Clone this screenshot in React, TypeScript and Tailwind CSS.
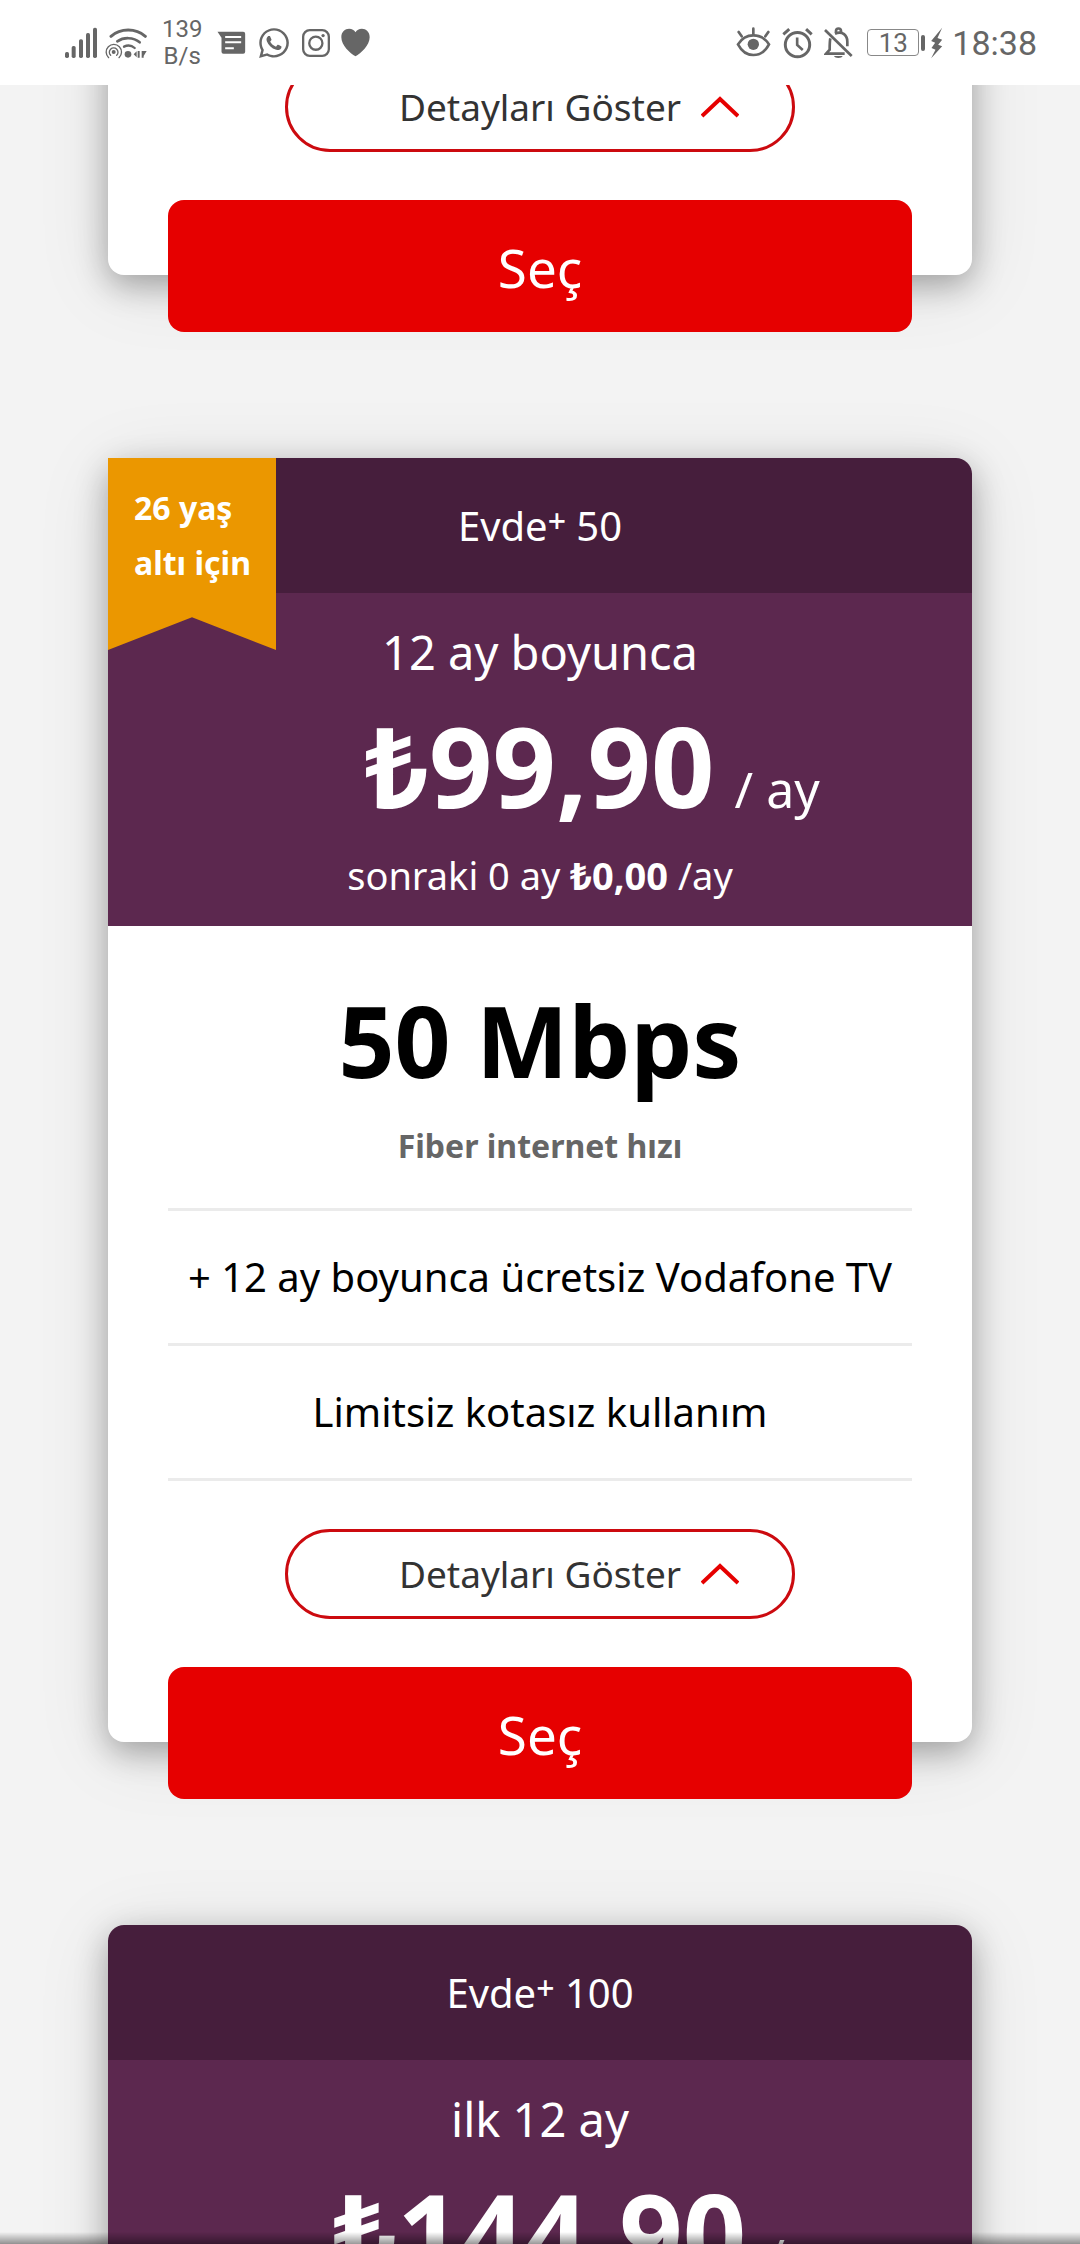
import React from "react";
import { FaWhatsapp } from "react-icons/fa";

interface Plan {
  id: number;
  name: string;
  speed: string;
  badge?: string[];
  period: string;
  price: string;
  nextMonths?: string;
  nextPrice?: string;
  mbps?: string;
  features?: string[];
}

const plans: Plan[] = [
  {
    id: 2,
    name: "Evde",
    speed: "50",
    badge: ["26 yaş", "altı için"],
    period: "12 ay boyunca",
    price: "₺99,90",
    nextMonths: "sonraki 0 ay",
    nextPrice: "₺0,00",
    mbps: "50 Mbps",
    features: ["+ 12 ay boyunca ücretsiz Vodafone TV", "Limitsiz kotasız kullanım"],
  },
  {
    id: 3,
    name: "Evde",
    speed: "100",
    period: "ilk 12 ay",
    price: "₺144,90",
  },
];

const SignalIcon = () => (
  <svg viewBox="72 78 102 96" className="h-8 w-[34px]" fill="currentColor">
    <rect x="75" y="153" width="12" height="18" rx="5" />
    <rect x="95" y="135" width="12" height="36" rx="5" />
    <rect x="117" y="115" width="12" height="56" rx="5" />
    <rect x="138" y="96" width="12" height="75" rx="5" />
    <rect x="159" y="80" width="12" height="91" rx="5" />
  </svg>
);

const WifiIcon = () => (
  <svg viewBox="196 78 126 96" className="h-8 w-[42px]" fill="none" stroke="currentColor" strokeLinecap="round">
    <path d="M214 106C243 81 288 81 317 106" strokeWidth="9" />
    <path d="M233 121C252 108 281 108 300 124" strokeWidth="8" />
    <path d="M253 137C263 132 276 133 285 141" strokeWidth="7" />
    <circle cx="222" cy="153" r="6" fill="currentColor" stroke="none" />
    <path d="M213 163A13 13 0 1 1 231 163" strokeWidth="4" />
    <path d="M207 170A23 23 0 1 1 238 170" strokeWidth="4" />
    <circle cx="265" cy="160" r="10" fill="currentColor" stroke="none" />
    <path d="M282 160l9-9v18zM294 150h6v20h-6zM306 150h6v20h-6zM312 150h9l-9 15z" fill="currentColor" stroke="none" />
  </svg>
);

const MessageIcon = () => (
  <svg viewBox="534 88 86 84" className="h-7 w-[29px]">
    <path d="M535 96H612q6 0 6 6V156q0 6-6 6H553q-6 0-6-6V114z" fill="currentColor" />
    <path d="M558 112H606M558 128H606M558 146H584" stroke="white" strokeWidth="6" />
  </svg>
);

const InstagramIcon = () => (
  <svg viewBox="786 87 85 85" className="size-7" fill="none" stroke="currentColor" strokeWidth="7">
    <rect x="789.5" y="90.5" width="78" height="78" rx="20" />
    <circle cx="828" cy="130" r="20" />
    <circle cx="850" cy="107" r="5" fill="currentColor" stroke="none" />
  </svg>
);

const HeartIcon = () => (
  <svg viewBox="911 87 86 85" className="size-[29px]" fill="currentColor">
    <path d="M954 170C938 162 912 138 912 114C912 98 923 89 935 89C944 89 950 93 954 99C958 93 964 89 973 89C985 89 996 98 996 114C996 138 970 162 954 170Z" />
  </svg>
);

const EyeIcon = () => (
  <svg viewBox="78 82 105 93" className="h-[31px] w-[35px]" fill="none" stroke="currentColor" strokeWidth="8" strokeLinecap="round">
    <path d="M84 134C95 116 112 107 130 107C149 107 166 116 177 134C166 155 149 166 130 166C112 166 95 155 84 134Z" />
    <circle cx="130" cy="134" r="17" fill="currentColor" stroke="none" />
    <path d="M130 87V105M86 97L95 110M175 97L166 110" />
  </svg>
);

const AlarmIcon = () => (
  <svg viewBox="214 78 94 96" className="h-8 w-[31px]" fill="none" stroke="currentColor" strokeWidth="9">
    <circle cx="261" cy="131" r="37" />
    <path d="M260 109V132L277 147" strokeWidth="8" />
    <path d="M218 100L236 84M304 100L287 84" />
  </svg>
);

const BellOffIcon = () => (
  <svg viewBox="344 78 87 96" className="h-8 w-[29px]" fill="none" stroke="currentColor" strokeWidth="8">
    <path d="M347 87L427 165" />
    <path d="M363 112C361 120 361 130 361 146L350 158H406" />
    <path d="M377 98C400 88 414 104 414 122V136" />
    <path d="M380 95V90A7 7 0 0 1 395 90V95" />
    <path d="M374 165H400C398 173 376 173 374 165Z" fill="currentColor" stroke="none" />
  </svg>
);

const BoltIcon = () => (
  <svg viewBox="668 80 38 96" className="h-8 w-[13px]" fill="currentColor">
    <path d="M704 82L671 122L683 127L672 143L684 148L671 174L704 138L692 133L704 118L690 113Z" />
  </svg>
);

const StatusBar = () => (
  <header className="relative z-10 flex h-[85px] shrink-0 items-center justify-between bg-white pr-[43px] pl-[64px] font-[Roboto,sans-serif] text-[#666]">
    <div className="flex items-center">
      <SignalIcon />
      <div className="ml-[7px]">
        <WifiIcon />
      </div>
      <div className="mx-[15px] flex flex-col items-center text-2xl leading-[27px]">
        <span>139</span>
        <span>B/s</span>
      </div>
      <div className="flex items-center gap-[11px]">
        <MessageIcon />
        <FaWhatsapp size={34} />
        <InstagramIcon />
        <HeartIcon />
      </div>
    </div>
    <div className="flex items-center">
      <div className="flex items-center gap-[11px]">
        <EyeIcon />
        <AlarmIcon />
        <BellOffIcon />
      </div>
      <div className="ml-[14px] flex h-[27px] w-[52px] items-center justify-center rounded border border-[#888] text-[26px] leading-none">
        13
      </div>
      <div className="ml-[2px] h-4 w-1 rounded-sm bg-[#666]" />
      <div className="ml-[5px]">
        <BoltIcon />
      </div>
      <span className="ml-[9px] text-[34px] leading-10">18:38</span>
    </div>
  </header>
);

const CardActions = () => (
  <div className="flex flex-col items-center px-[60px] pt-12">
    <button className="grid h-[90px] w-[510px] max-w-full grid-cols-[1fr_auto_1fr] items-center rounded-full border-3 border-[#cc0a0f] text-[37px] text-[#333]">
      <span className="col-start-2">Detayları Göster</span>
      <svg viewBox="0 0 38 22" className="ml-5 h-[22px] w-[38px]" fill="none" stroke="#e60000" strokeWidth="4">
        <path d="M1 20L19 3L37 20" />
      </svg>
    </button>
    <button className="mt-12 -mb-[57px] h-[132px] w-full rounded-2xl bg-[#e60000] pt-1 text-[53px] text-white">
      Seç
    </button>
  </div>
);

const cardShadow = "shadow-[0_10px_32px_rgba(0,0,0,0.3),0_10px_76px_rgba(0,0,0,0.1)]";

const PlanCard = ({ plan }: { plan: Plan }) => (
  <article className={`relative rounded-2xl bg-white ${cardShadow}`}>
    {plan.badge && (
      <div className="absolute top-0 left-0 flex h-48 w-[168px] flex-col bg-[#eb9700] pt-[22px] pl-[26px] text-[32px] leading-[55px] font-bold whitespace-nowrap text-white [clip-path:polygon(0_0,100%_0,100%_100%,50%_83%,0_100%)]">
        {plan.badge.map((line) => (
          <span key={line}>{line}</span>
        ))}
      </div>
    )}
    <h2 className="flex h-[135px] items-center justify-center rounded-t-2xl bg-[#461e3c] text-[40px] text-white">
      <span>
        {plan.name}
        <sup className="-top-2 text-[32px] font-medium">+</sup> {plan.speed}
      </span>
    </h2>
    <div className="flex flex-col bg-[#5c284f] pt-[31px] pb-[27px] text-center text-white">
      <p className="text-[47px] leading-[56px]">{plan.period}</p>
      <p className="mt-[29px] grid grid-cols-[1fr_auto_1fr] items-baseline">
        <strong className="col-start-2 text-[111px] leading-[112px]">{plan.price}</strong>
        <span className="pl-5 text-left text-[50px] leading-[56px]">/ ay</span>
      </p>
      {plan.nextPrice && (
        <p className="mt-[30px] text-[38px] leading-[48px]">
          {plan.nextMonths} <strong>{plan.nextPrice}</strong> /ay
        </p>
      )}
    </div>
    {plan.features && (
      <>
        <div className="px-[60px] pt-16 text-center">
          <h3 className="text-[98px] leading-[100px] font-bold text-black">{plan.mbps}</h3>
          <p className="mt-9 pb-[42px] text-[32px] leading-10 font-bold text-[#666]">Fiber internet hızı</p>
          <ul className="border-t-3 border-[#ebebeb]">
            {plan.features.map((feature) => (
              <li
                key={feature}
                className="flex h-[135px] items-center justify-center border-b-3 border-[#ebebeb] text-[40px] whitespace-nowrap text-black"
              >
                {feature}
              </li>
            ))}
          </ul>
        </div>
        <CardActions />
      </>
    )}
  </article>
);

const App = () => {
  return (
    <div className="flex h-screen flex-col overflow-hidden bg-[#f3f3f3] font-['Noto_Sans',sans-serif]">
      <StatusBar />
      <main className="-mt-[71px] flex flex-col gap-[183px] px-[10%]">
        {/* bottom end of the previous plan, scrolled under the status bar */}
        <article className={`rounded-b-2xl bg-white ${cardShadow}`}>
          <CardActions />
        </article>
        {plans.map((plan) => (
          <PlanCard key={plan.id} plan={plan} />
        ))}
      </main>
      <div className="fixed inset-x-0 bottom-0 h-3 bg-linear-to-b from-transparent to-black/40" />
    </div>
  );
};

export default App;
